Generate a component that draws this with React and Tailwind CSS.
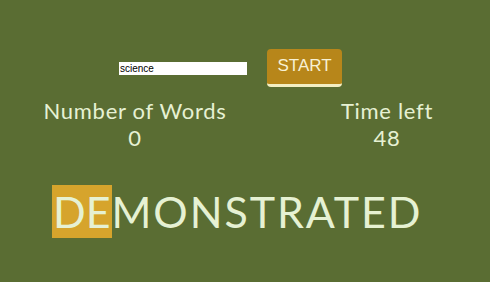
import { useState } from "react";

const App = () => {
  const [topic, setTopic] = useState("science");
  const word = "DEMONSTRATED";
  const typed = 2;

  return (
    <div className="w-full h-[282px] bg-[#5a6d33] text-[#e6f1d3] font-['Lato',sans-serif] overflow-hidden">
      <div className="flex items-start pt-[49px] pl-[119px] gap-[20px]">
        <input
          type="text"
          value={topic}
          onChange={(e) => setTopic(e.target.value)}
          className="mt-[13px] w-[128px] h-[13px] bg-white text-black text-[10px] leading-[13px] px-[1px] font-['Liberation_Sans',sans-serif] outline-none"
        />
        <button className="w-[75px] h-[38px] rounded-[4px] bg-[#b7861a] border-b-[3px] border-[#f3eec2] text-[#f7f1d4] text-[17px] font-['Liberation_Sans',sans-serif] pb-[1px]">
          START
        </button>
      </div>

      <div className="grid grid-cols-[270px_1fr] mt-[10px] text-[22px] leading-[27px] tracking-[0.7px]">
        <div className="text-center">
          <div>Number of Words</div>
          <div>0</div>
        </div>
        <div className="text-center pl-[14px]">
          <div>Time left</div>
          <div>48</div>
        </div>
      </div>

      <div className="flex pl-[52px] mt-[34px] text-[43px] leading-[53px]">
        <span className="bg-[#d6a42c] px-[1px]">{word.slice(0, typed)}</span>
        <span className="tracking-[1.9px]">{word.slice(typed)}</span>
      </div>
    </div>
  );
};

export default App;
